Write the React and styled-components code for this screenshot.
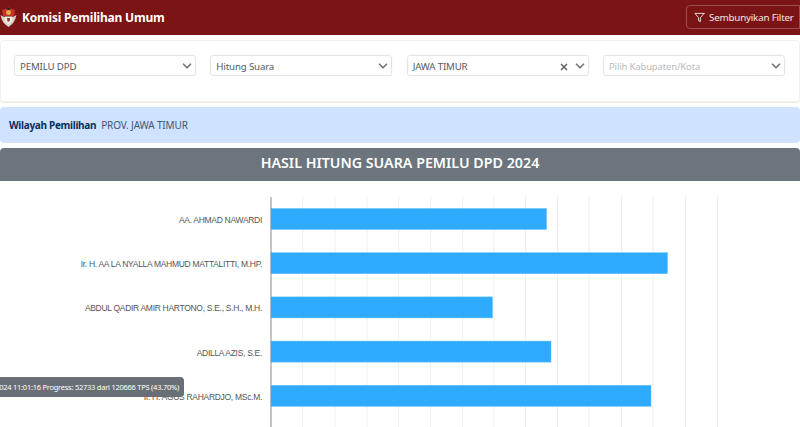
import React from 'react'
import styled, { createGlobalStyle } from 'styled-components'
import { FiChevronDown, FiFilter, FiX } from 'react-icons/fi'

const GlobalStyle = createGlobalStyle`
  html, body {
    margin: 0;
    padding: 0;
    height: 427px;
    overflow: hidden;
    background: #fff;
    font-family: 'Noto Sans', 'Open Sans', sans-serif;
  }
  * { box-sizing: border-box; }
`

const Page = styled.div`
  width: 800px;
  height: 427px;
  overflow: hidden;
  position: relative;
`

const Navbar = styled.header`
  height: 35px;
  background: #7b1414;
  display: flex;
  align-items: center;
  justify-content: space-between;
`

const Brand = styled.div`
  display: flex;
  align-items: center;
  gap: 5px;
  margin-top: -1px;
  color: #fff;
  font-size: 12px;
  font-weight: 700;
  letter-spacing: -0.2px;
`

const FilterToggle = styled.button`
  width: 114px;
  height: 24px;
  margin-top: -1px;
  padding: 0 0 0 7px;
  display: flex;
  align-items: center;
  gap: 3px;
  flex-shrink: 0;
  background: transparent;
  color: #f3e6e6;
  border: 1px solid #9a5050;
  border-radius: 4px 0 0 4px;
  font: 400 9.8px 'Noto Sans', sans-serif;
  letter-spacing: -0.2px;
  white-space: nowrap;
`

const FunnelIcon = styled(FiFilter)`
  flex-shrink: 0;
  font-size: 11px;
  margin-right: 1px;
`

const FilterCard = styled.section`
  height: 62px;
  margin-top: 5px;
  padding: 14px 14px 0 13px;
  display: grid;
  grid-template-columns: repeat(4, 182px);
  justify-content: space-between;
  align-items: start;
  border: 1px solid #f0f0f0;
  border-radius: 4px;
  box-shadow: 0 1px 1px #efeadf;
`

const Select = styled.div`
  height: 21px;
  padding: 1px 1px 0 5px;
  display: flex;
  align-items: center;
  border: 1px solid #e3e5e8;
  border-radius: 3px;
  font-size: ${p => (p.$placeholder ? '9.5px' : '9.7px')};
  letter-spacing: -0.15px;
  color: ${p => (p.$placeholder ? '#b9bcc0' : '#555b61')};
  box-shadow: 0 0 2px #f2f2f2;
`

const SelectValue = styled.span`
  flex: 1;
`

const ClearIcon = styled(FiX)`
  color: #666;
  font-size: 10px;
  stroke-width: 4;
  margin: 2px 4px 0 0;
`

const Chevron = styled(FiChevronDown)`
  color: #777;
  font-size: 14px;
  stroke-width: 3;
`

const RegionAlert = styled.div`
  height: 36px;
  margin-top: 5px;
  padding-left: 9px;
  display: flex;
  align-items: center;
  gap: 5px;
  background: #cfe2ff;
  border-radius: 4px;
  font-size: 10px;
  letter-spacing: -0.15px;
  color: #45566f;
  strong {
    color: #0a2c60;
    font-weight: 700;
    letter-spacing: -0.3px;
  }
`

const TitleBar = styled.h2`
  height: 33px;
  margin: 5px 0 0;
  padding-bottom: 5px;
  display: flex;
  align-items: center;
  justify-content: center;
  background: #6c757d;
  color: #fff;
  border-radius: 4px 4px 0 0;
  font-size: 14.25px;
  font-weight: 600;
`

const ChartFrame = styled.svg`
  display: block;
  width: 800px;
  height: 246px;
`

const BarLabel = styled.text`
  font: 8.5px 'Liberation Sans', Arial, sans-serif;
  letter-spacing: -0.3px;
  fill: #555;
  text-anchor: end;
`

const Toast = styled.div`
  position: absolute;
  left: 0;
  top: 377px;
  width: 184px;
  height: 20px;
  display: flex;
  align-items: center;
  justify-content: flex-end;
  padding-right: 5px;
  background: #686f76;
  color: #fff;
  border-radius: 0 4px 4px 0;
  font: 7.5px 'Noto Sans', sans-serif;
  letter-spacing: -0.25px;
  white-space: nowrap;
`

const filters = [
  { value: 'PEMILU DPD' },
  { value: 'Hitung Suara' },
  { value: 'JAWA TIMUR', clearable: true },
  { value: 'Pilih Kabupaten/Kota', placeholder: true },
]

const candidates = [
  { name: 'AA. AHMAD NAWARDI', end: 546.5 },
  { name: 'Ir. H. AA LA NYALLA MAHMUD MATTALITTI, M.HP.', end: 667.5 },
  { name: 'ABDUL QADIR AMIR HARTONO, S.E., S.H., M.H.', end: 492.5 },
  { name: 'ADILLA AZIS, S.E.', end: 551 },
  { name: 'Ir. H. AGUS RAHARDJO, MSc.M.', end: 651 },
]

const gridLines = [302.7, 335, 367, 398.7, 430.7, 462.7, 494, 525.5, 557.5, 589, 621.5, 653, 685.5, 717.5]

const KpuLogo = () => (
  <svg width="17" height="21" viewBox="0 0 17 21">
    <path d="M2 3 L8.5 0.5 L15 3 L14 9 L3 9 Z" fill="#c9302c" />
    <path d="M6 1 L8.5 4 L11 1 Z" fill="#2b2422" />
    <circle cx="8.5" cy="5.5" r="2.4" fill="#e3b23c" />
    <path d="M0.5 8 C2 14 4 17 8.5 20 C13 17 15 14 16.5 8 L13 10 L4 10 Z" fill="#d9d4c6" />
    <path d="M4.5 9.5 H12.5 L11.5 15 L8.5 17 L5.5 15 Z" fill="#f4f1e8" />
    <path d="M7 11 H10 L9.6 14.5 H7.4 Z" fill="#9c2a26" />
  </svg>
)

const ResultChart = () => (
  <ChartFrame viewBox="0 0 800 246">
    {gridLines.map(x => (
      <line key={x} x1={x} x2={x} y1="16" y2="246" stroke="#efefef" />
    ))}
    {candidates.map((c, i) => (
      <g key={c.name}>
        <rect x="271" y={27.5 + i * 44.2} width={c.end - 271} height="21" fill="#2eaaff" stroke="#5cc0ff" strokeWidth="0.5" />
        <BarLabel x="262" y={42 + i * 44.2}>{c.name}</BarLabel>
      </g>
    ))}
    <line x1="271" x2="271" y1="16" y2="246" stroke="#8a8a8a" />
  </ChartFrame>
)

export default function App() {
  return (
    <Page>
      <GlobalStyle />
      <Navbar>
        <Brand>
          <KpuLogo />
          Komisi Pemilihan Umum
        </Brand>
        <FilterToggle>
          <FunnelIcon />
          Sembunyikan Filter
        </FilterToggle>
      </Navbar>
      <FilterCard>
        {filters.map(f => (
          <Select key={f.value} $placeholder={f.placeholder}>
            <SelectValue>{f.value}</SelectValue>
            {f.clearable && <ClearIcon />}
            <Chevron />
          </Select>
        ))}
      </FilterCard>
      <RegionAlert>
        <strong>Wilayah Pemilihan</strong>
        PROV. JAWA TIMUR
      </RegionAlert>
      <TitleBar>HASIL HITUNG SUARA PEMILU DPD 2024</TitleBar>
      <ResultChart />
      <Toast>024 11:01:16 Progress: 52733 dari 120666 TPS (43.70%)</Toast>
    </Page>
  )
}
